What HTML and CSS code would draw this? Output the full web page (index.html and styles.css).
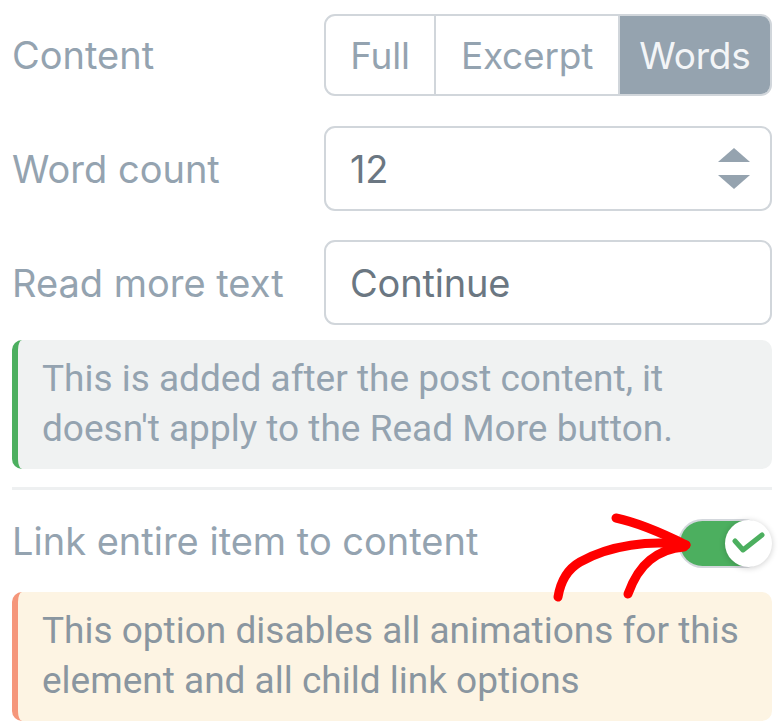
FILE: index.html
```html
<!DOCTYPE html>
<html>
<head>
<meta charset="utf-8">
<link rel="stylesheet" href="styles.css">
</head>
<body>
<div class="panel">
  <div class="row row-content">
    <div class="label">Content</div>
    <div class="segmented">
      <div class="seg seg-full">Full</div>
      <div class="seg seg-excerpt">Excerpt</div>
      <div class="seg seg-words active">Words</div>
    </div>
  </div>
  <div class="row row-count">
    <div class="label">Word count</div>
    <div class="input number">
      <span class="value">12</span>
      <span class="spinner">
        <svg width="32" height="42" viewBox="0 0 32 42"><polygon points="16,0 32,14 0,14" fill="#95a3af"/><polygon points="0,27 32,27 16,41" fill="#95a3af"/></svg>
      </span>
    </div>
  </div>
  <div class="row row-more">
    <div class="label">Read more text</div>
    <div class="input"><span class="value">Continue</span></div>
  </div>
  <div class="notice notice-info">This is added after the post content, it doesn't apply to the Read More button.</div>
  <div class="separator"></div>
  <div class="row row-link">
    <div class="label">Link entire item to content</div>
    <div class="toggle">
      <div class="knob">
        <svg width="34" height="22" viewBox="0 0 34 22"><polyline points="3,9 11,18 30,3" fill="none" stroke="#4caf5f" stroke-width="5" stroke-linecap="round" stroke-linejoin="round"/></svg>
      </div>
    </div>
  </div>
  <div class="notice notice-warn">This option disables all animations for this element and all child link options</div>
  <svg class="arrow" width="782" height="728" viewBox="0 0 782 728">
    <g fill="none" stroke="#ff0000" stroke-width="9" stroke-linecap="round" stroke-linejoin="round">
      <path d="M558,597 C560,585 566,570 580,562 C610,545 650,540 686,545"/>
      <path d="M616,518 C635,522 660,532 686,545"/>
      <path d="M628,594 C633,580 640,568 650,560 C660,552 670,548 684,547"/>
    </g>
  </svg>
</div>
</body>
</html>
```
FILE: styles.css
```css
html, body {
  margin: 0;
  padding: 0;
  background: #ffffff;
}
.panel {
  position: relative;
  width: 760px;
  padding: 14px 10px 0 12px;
  font-family: Inter, "Noto Sans", sans-serif;
  color: #94a3b0;
}
.row {
  display: flex;
  align-items: center;
}
.label {
  width: 312px;
  flex: none;
  font-size: 38px;
  color: #94a3b0;
}
.segmented {
  flex: 1;
  display: flex;
  height: 82px;
  box-sizing: border-box;
  border: 2px solid #d1d6db;
  border-radius: 11px;
  overflow: hidden;
}
.seg {
  display: flex;
  align-items: center;
  justify-content: center;
  font-size: 37px;
  letter-spacing: -0.2px;
  color: #94a3b0;
}
.seg-full { width: 108px; border-right: 2px solid #d1d6db; }
.seg-excerpt { width: 182px; border-right: 2px solid #d1d6db; }
.seg-words { flex: 1; }
.seg.active { background: #95a3af; color: #f3f5f7; }
.row-count { margin-top: 30px; }
.row-more { margin-top: 29px; }
.input {
  flex: 1;
  height: 85px;
  box-sizing: border-box;
  border: 2px solid #d1d6db;
  border-radius: 11px;
  display: flex;
  align-items: center;
  justify-content: space-between;
  padding: 0 20px 0 24px;
  font-size: 38px;
  letter-spacing: -0.2px;
  color: #6b7782;
}
.spinner { display: flex; align-items: center; }
.notice {
  margin-top: 15px;
  border-radius: 10px;
  padding: 14px 20px 15px 24px;
  font-family: Roboto, "Noto Sans", sans-serif;
  font-size: 37px;
  line-height: 50px;
}
.notice-info {
  background: #f0f2f2;
  border-left: 6px solid #4caf5f;
  color: #94a3b0;
}
.separator {
  margin-top: 18px;
  height: 3px;
  background: #eef0f1;
}
.row-link {
  height: 102px;
  justify-content: space-between;
}
.row-link .label { width: auto; }
.toggle {
  position: relative;
  width: 86px;
  height: 45px;
  margin-right: 6px;
  margin-top: 4px;
  border-radius: 23px;
  background: #4caf5f;
  box-shadow: 0 0 0 2px #d3d7dc;
}
.knob {
  position: absolute;
  right: -6px;
  top: -1px;
  width: 47px;
  height: 47px;
  border-radius: 50%;
  background: #ffffff;
  box-shadow: 0 1px 6px rgba(0,0,0,0.2);
  display: flex;
  align-items: center;
  justify-content: center;
}
.notice-warn {
  margin-top: 0;
  background: #fdf4e3;
  border-left: 6px solid #f5967a;
  color: #8a96a0;
}
.arrow {
  position: absolute;
  left: 0;
  top: 0;
  pointer-events: none;
}
```
